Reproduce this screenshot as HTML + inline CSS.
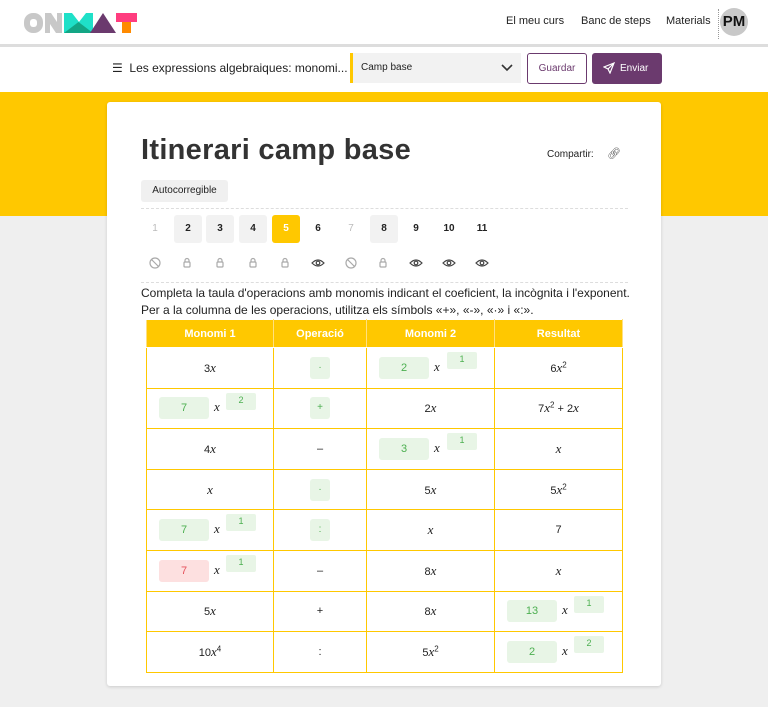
<!DOCTYPE html>
<html><head><meta charset="utf-8"><style>
*{box-sizing:border-box;margin:0;padding:0}
body{width:768px;height:707px;overflow:hidden;background:#efefef;font-family:"Liberation Sans",sans-serif;color:#222;position:relative}
.hdr{position:absolute;left:0;top:0;width:768px;height:45px;background:#fff}
.hline{position:absolute;left:0;top:44px;width:768px;height:3px;background:#ddd}
.tb{position:absolute;left:0;top:47px;width:768px;height:45px;background:#fff}
.yb{position:absolute;left:0;top:92px;width:768px;height:124px;background:#ffc800}
.nav{position:absolute;top:15px;font-size:11px;color:#222}
.av{position:absolute;left:720px;top:8px;width:28px;height:28px;border-radius:50%;background:#c8c8c8;font-weight:bold;font-size:15px;text-align:center;line-height:28px;color:#111}
.card{position:absolute;left:107px;top:102px;width:554px;height:584px;background:#fff;box-shadow:0 1px 3px rgba(0,0,0,.15);border-radius:3px}
h1{position:absolute;left:141px;top:134px;font-size:29px;font-weight:bold;color:#333;letter-spacing:.3px}
.pill{position:absolute;left:141px;top:180px;width:87px;height:22px;background:#f0f0f0;border-radius:3px;font-size:10px;text-align:center;line-height:22px}
.dash{position:absolute;left:141px;width:487px;border-top:1px dashed #ddd}
.num{position:absolute;top:215px;width:28px;height:28px;border-radius:3px;font-size:10px;font-weight:bold;text-align:center;line-height:28px}
.txt{position:absolute;left:141px;top:285px;font-size:12px;line-height:17px;color:#222}
table{position:absolute;left:146px;top:319px;border-collapse:collapse;table-layout:fixed}
td,th{border:1.5px solid #ffc800;text-align:center;font-size:11px;position:relative}
th{background:#ffc800;color:#fff;font-weight:bold;height:28px;border-color:#fff #ffe080}
td{height:40.6px}
td.l{text-align:left;padding-left:12px}
i{font-family:"Liberation Serif",serif;font-size:13px}
.in{display:inline-block;width:50px;height:22px;background:#e8f5e6;border-radius:3px;color:#4caf50;line-height:22px;vertical-align:middle;text-align:center}
.red{background:#fde0e0;color:#e5505a}
.ex{position:absolute;left:79px;width:30px;height:17px;background:#e8f5e6;border-radius:2px;color:#4caf50;font-size:9px;line-height:14px;top:4px;text-align:center}
.op{display:inline-block;width:20px;height:22px;background:#e8f5e6;border-radius:3px;color:#4caf50;line-height:22px;font-size:10px}
.m{display:inline-block;padding-left:5px}
</style></head><body>
<div class="hdr">
<svg style="position:absolute;left:24px;top:12px" width="114" height="22" viewBox="0 0 114 22">
<rect x="0" y="1" width="19" height="20" rx="9" fill="#c8c8c8"/><rect x="6" y="7" width="7" height="8" rx="3" fill="#fff"/>
<path d="M21 1h6l6 9V1h5v20h-6l-6-9v9h-5z" fill="#c8c8c8"/>
<path d="M40 1h8l7 9 7-9h7v20H40z" fill="#1fe0c8"/><path d="M40 21l14.5-11L69 21z" fill="#13a685"/>
<path d="M66 21L79 1l13 20z" fill="#6b3a6e"/>
<rect x="92" y="1" width="21" height="9" fill="#ff3d7f"/><rect x="98" y="10" width="9" height="11" fill="#ff8a00"/>
</svg>
<div class="nav" style="left:506px">El meu curs</div>
<div class="nav" style="left:581px">Banc de steps</div>
<div class="nav" style="left:666px">Materials</div>
<div style="position:absolute;left:718px;top:9px;height:30px;border-left:1px dotted #999"></div>
<div class="av">PM</div>
</div>
<div class="hline"></div>
<div class="tb">
<div style="position:absolute;left:112px;top:14px;font-size:12px;color:#222">☰&nbsp; Les expressions algebraiques: monomi...</div>
<div style="position:absolute;left:350px;top:6px;width:171px;height:30px;background:#f2f2f2;border-left:3px solid #ffc800;font-size:10px;line-height:30px;padding-left:8px">Camp base
<svg style="position:absolute;right:8px;top:10px" width="12" height="9" viewBox="0 0 12 9"><path d="M1 2l5 5 5-5" stroke="#333" stroke-width="1.6" fill="none"/></svg></div>
<div style="position:absolute;left:527px;top:6px;width:60px;height:31px;border:1px solid #6b3a6e;border-radius:3px;color:#6b3a6e;font-size:10px;text-align:center;line-height:29px">Guardar</div>
<div style="position:absolute;left:592px;top:6px;width:70px;height:31px;background:#6b3a6e;border-radius:3px;color:#fff;font-size:10px;line-height:31px;padding-left:28px">Enviar
<svg style="position:absolute;left:11px;top:9px" width="12" height="12" viewBox="0 0 12 12"><path d="M11 1L1 5l4 2 2 4z M5 7l6-6" stroke="#fff" fill="none" stroke-width="1.2"/></svg></div>
</div>
<div class="yb"></div>
<div class="card"></div>
<h1>Itinerari camp base</h1>
<div style="position:absolute;left:547px;top:149px;font-size:10px">Compartir:</div>
<div style="position:absolute;left:607px;top:147px;font-size:11px;color:#555">🔗︎</div>
<div class="pill">Autocorregible</div>
<div class="dash" style="top:208px"></div>
<div class="num" style="left:141px;color:#bbb;font-weight:normal">1</div>
<div class="num" style="left:174px;background:#f2f2f2">2</div>
<div class="num" style="left:206px;background:#f2f2f2">3</div>
<div class="num" style="left:239px;background:#f2f2f2">4</div>
<div class="num" style="left:272px;background:#ffc800;color:#fff">5</div>
<div class="num" style="left:304px">6</div>
<div class="num" style="left:337px;color:#bbb;font-weight:normal">7</div>
<div class="num" style="left:370px;background:#f2f2f2">8</div>
<div class="num" style="left:402px">9</div>
<div class="num" style="left:435px">10</div>
<div class="num" style="left:468px">11</div>
<svg style="position:absolute;left:0;top:256px" width="768" height="14">
<g stroke="#aaa" fill="none" stroke-width="1.2">
<circle cx="155" cy="7" r="5"/><path d="M151.5 3.5l7 7"/>
<circle cx="351" cy="7" r="5"/><path d="M347.5 3.5l7 7"/>
<g id="lk"><rect x="184" y="6" width="6" height="5" rx="1"/><path d="M185 6V4.5a2 2 0 0 1 4 0V6"/></g>
<use href="#lk" x="33"/><use href="#lk" x="66"/><use href="#lk" x="98"/><use href="#lk" x="196"/>
</g>
<g stroke="#444" fill="none" stroke-width="1.2">
<g id="ey"><path d="M312 7q6-6 12 0q-6 6-12 0z"/><circle cx="318" cy="7" r="1.8"/></g>
<use href="#ey" x="98"/><use href="#ey" x="131"/><use href="#ey" x="164"/>
</g></svg>
<div class="dash" style="top:282px"></div>
<div class="txt">Completa la taula d'operacions amb monomis indicant el coeficient, la incògnita i l'exponent.<br>Per a la columna de les operacions, utilitza els símbols «+», «-», «·» i «:».</div>
<table>
<colgroup><col style="width:127px"><col style="width:93px"><col style="width:128px"><col style="width:128px"></colgroup>
<tr><th>Monomi 1</th><th>Operació</th><th>Monomi 2</th><th>Resultat</th></tr>
<tr><td>3<i>x</i></td><td><span class="op">·</span></td><td class="l"><span class="in">2</span><span class="m"><i>x</i></span><span class="ex" style="left:80px">1</span></td><td>6<i>x</i><sup style="font-size:8px">2</sup></td></tr>
<tr><td class="l"><span class="in">7</span><span class="m"><i>x</i></span><span class="ex">2</span></td><td><span class="op">+</span></td><td>2<i>x</i></td><td>7<i>x</i><sup style="font-size:8px">2</sup> + 2<i>x</i></td></tr>
<tr><td>4<i>x</i></td><td>–</td><td class="l"><span class="in">3</span><span class="m"><i>x</i></span><span class="ex" style="left:80px">1</span></td><td><i>x</i></td></tr>
<tr><td><i>x</i></td><td><span class="op">·</span></td><td>5<i>x</i></td><td>5<i>x</i><sup style="font-size:8px">2</sup></td></tr>
<tr><td class="l"><span class="in">7</span><span class="m"><i>x</i></span><span class="ex">1</span></td><td><span class="op">:</span></td><td><i>x</i></td><td>7</td></tr>
<tr><td class="l"><span class="in red">7</span><span class="m"><i>x</i></span><span class="ex">1</span></td><td>–</td><td>8<i>x</i></td><td><i>x</i></td></tr>
<tr><td>5<i>x</i></td><td>+</td><td>8<i>x</i></td><td class="l"><span class="in">13</span><span class="m"><i>x</i></span><span class="ex">1</span></td></tr>
<tr><td>10<i>x</i><sup style="font-size:8px">4</sup></td><td>:</td><td>5<i>x</i><sup style="font-size:8px">2</sup></td><td class="l"><span class="in">2</span><span class="m"><i>x</i></span><span class="ex">2</span></td></tr>
</table>
</body></html>
